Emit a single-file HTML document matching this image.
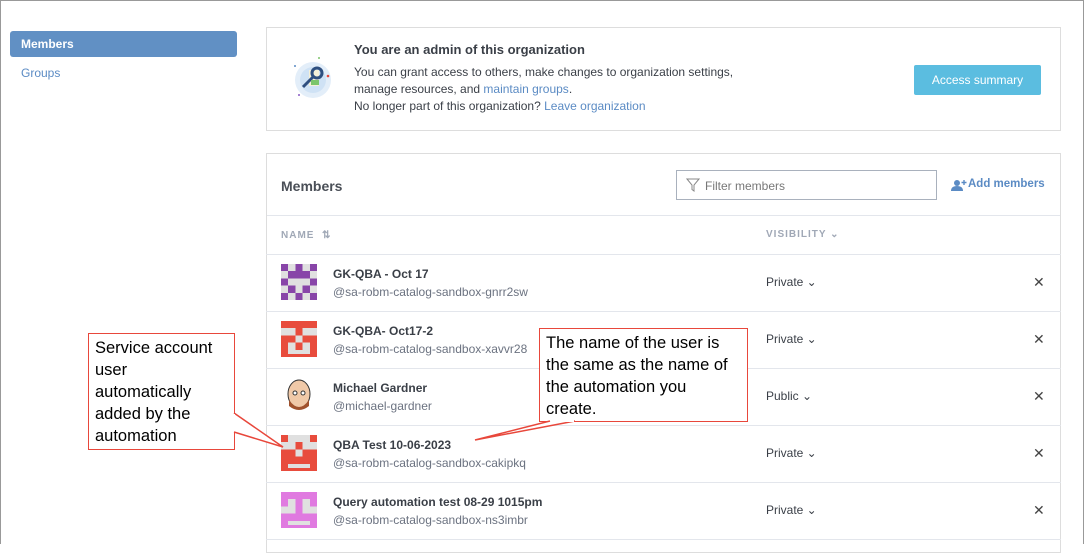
<!DOCTYPE html>
<html><head><meta charset="utf-8"><style>
*{box-sizing:border-box;margin:0;padding:0}
body{width:1084px;height:544px;overflow:hidden;background:#fff;font-family:"Liberation Sans",sans-serif;position:relative;color:#3a3f47}
.frame{position:absolute;left:0;top:0;width:1084px;height:544px;border:1px solid #999;border-bottom:none;pointer-events:none}
.nav{position:absolute;left:10px;top:31px;width:227px;height:26px;background:#6190c4;border-radius:3px;color:#fff;font-size:12px;font-weight:bold;padding:6px 11px}
.grp{position:absolute;left:21px;top:66px;font-size:12px;color:#5b8bc4}
.p1{position:absolute;left:266px;top:27px;width:795px;height:104px;border:1px solid #ddd}
.p2{position:absolute;left:266px;top:153px;width:795px;height:400px;border:1px solid #ddd}
.a{color:#5b8bc4}
.btn{position:absolute;left:914px;top:65px;width:127px;height:30px;background:#5bbde0;color:#fff;font-size:12px;text-align:center;line-height:30px;border-radius:2px}
.row{position:absolute;left:266px;width:795px;height:57px;border-top:1px solid #e3e6ec}
.av{position:absolute;left:15px;top:9px;width:36px;height:36px}
.nm{position:absolute;left:67px;top:12px;font-size:12px;font-weight:bold;color:#3a3f47}
.hd{position:absolute;left:67px;top:30px;font-size:12px;color:#6b7280}
.vis{position:absolute;left:500px;top:20px;font-size:12px;color:#3a3f47}
.x{position:absolute;left:767px;top:19px;font-size:14px;color:#444}
.call{position:absolute;border:1.5px solid #e8473b;background:#fff;font-size:16.5px;color:#000;line-height:22px;padding:3px 6px}
</style></head><body>
<div class="nav">Members</div>
<div class="grp">Groups</div>
<div class="p1">
<svg style="position:absolute;left:22px;top:28px" width="48" height="48"><circle cx="24" cy="24" r="18" fill="#e3eef9"/><circle cx="24" cy="24" r="13" fill="#cfe2f5"/><rect x="20" y="14" width="10" height="16" fill="#f5f0d8"/><circle cx="28" cy="17" r="5" fill="none" stroke="#2f4f7f" stroke-width="3"/><path d="M25 20 L14 31" stroke="#2f4f7f" stroke-width="3"/><rect x="22" y="24" width="8" height="5" fill="#7cc56a"/><circle cx="6" cy="10" r="1" fill="#5b8bc4"/><circle cx="39" cy="20" r="1.3" fill="#e8473b"/><circle cx="10" cy="39" r="1" fill="#8a5bc4"/><circle cx="30" cy="2" r="1" fill="#7cc56a"/></svg>
<div style="position:absolute;left:87px;top:14px;font-size:13px;font-weight:bold">You are an admin of this organization</div>
<div style="position:absolute;left:87px;top:36px;font-size:12px;line-height:17px">You can grant access to others, make changes to organization settings,<br>manage resources, and <span class="a">maintain groups</span>.<br>No longer part of this organization? <span class="a">Leave organization</span></div>
</div>
<div class="btn">Access summary</div>
<div class="p2">
<div style="position:absolute;left:14px;top:24px;font-size:14px;font-weight:bold;color:#4a4f57">Members</div>
<div style="position:absolute;left:409px;top:16px;width:261px;height:30px;border:1px solid #a9b1bd;font-size:12px;color:#777;padding:8px 0 0 28px">Filter members
<svg style="position:absolute;left:9px;top:7px" width="14" height="15"><path d="M1 1h12l-5 6v6l-2-1.5V7z" fill="none" stroke="#888"/></svg></div>
<svg style="position:absolute;left:684px;top:25px" width="16" height="12"><circle cx="6" cy="4" r="3" fill="#5b8bc4"/><path d="M0 12q0-5 6-5t6 5z" fill="#5b8bc4"/><path d="M13 1v5M10.5 3.5h5" stroke="#5b8bc4" stroke-width="1.4"/></svg>
<div style="position:absolute;left:701px;top:24px;font-size:11.5px;font-weight:bold;color:#5b8bc4">Add members</div>
<div style="position:absolute;left:0;top:61px;width:793px;border-top:1px solid #e3e6ec"></div>
<div style="position:absolute;left:14px;top:76px;font-size:10px;font-weight:bold;color:#a0a8b6;letter-spacing:1px">NAME &nbsp;⇅</div>
<div style="position:absolute;left:499px;top:75px;font-size:10px;font-weight:bold;color:#a0a8b6;letter-spacing:1px">VISIBILITY ⌄</div>
</div>
<div class="row" style="top:254px"><svg class="av" viewBox="0 0 5 5" shape-rendering="crispEdges"><rect width="5" height="5" fill="#8845a8"/><path fill="#e0e0e0" d="M1 0h1v1H1zM3 0h1v1H3zM0 1h1v1H0zM4 1h1v1H4zM1 2h3v1H1zM0 3h1v1H0zM2 3h1v1H2zM4 3h1v1H4zM1 4h1v1H1zM3 4h1v1H3z"/></svg><div class="nm">GK-QBA - Oct 17</div><div class="hd">@sa-robm-catalog-sandbox-gnrr2sw</div><div class="vis">Private ⌄</div><div class="x">✕</div></div>
<div class="row" style="top:311px"><svg class="av" viewBox="0 0 5 5" shape-rendering="crispEdges"><rect width="5" height="5" fill="#e84c3d"/><path fill="#e0e0e0" d="M0 1h2v1H0zM3 1h2v1H3zM2 2h1v1H2zM1 3h1v1H1zM3 3h1v1H3zM1 4h3v.6H1z"/></svg><div class="nm">GK-QBA- Oct17-2</div><div class="hd">@sa-robm-catalog-sandbox-xavvr28</div><div class="vis">Private ⌄</div><div class="x">✕</div></div>
<div class="row" style="top:368px"><svg class="av" viewBox="0 0 36 36"><ellipse cx="18" cy="16" rx="11" ry="14" fill="#f0c9a8" stroke="#333"/><path d="M8 22q10 14 20 0v6q-10 8-20 0z" fill="#a0522d"/><circle cx="14" cy="15" r="2" fill="#fff" stroke="#333"/><circle cx="22" cy="15" r="2" fill="#fff" stroke="#333"/></svg><div class="nm">Michael Gardner</div><div class="hd">@michael-gardner</div><div class="vis">Public ⌄</div><div class="x">✕</div></div>
<div class="row" style="top:425px"><svg class="av" viewBox="0 0 5 5" shape-rendering="crispEdges"><rect width="5" height="5" fill="#e84c3d"/><path fill="#e0e0e0" d="M1 0h3v1H1zM0 1h2v1H0zM3 1h2v1H3zM2 2h1v1H2zM1 4h3v.6H1z"/></svg><div class="nm">QBA Test 10-06-2023</div><div class="hd">@sa-robm-catalog-sandbox-cakipkq</div><div class="vis">Private ⌄</div><div class="x">✕</div></div>
<div class="row" style="top:482px"><svg class="av" viewBox="0 0 5 5" shape-rendering="crispEdges"><rect width="5" height="5" fill="#e07ae0"/><path fill="#e0e0e0" d="M1 1h1v2H1zM3 1h1v2H3zM0 2h1v1H0zM4 2h1v1H4zM1 4h3v.6H1z"/></svg><div class="nm">Query automation test 08-29 1015pm</div><div class="hd">@sa-robm-catalog-sandbox-ns3imbr</div><div class="vis">Private ⌄</div><div class="x">✕</div></div>
<div style="position:absolute;left:266px;top:539px;width:795px;border-top:1px solid #e3e6ec"></div>
<div class="call" style="left:88px;top:333px;width:147px;height:117px;padding-right:14px">Service account user automatically added by the automation</div>
<div class="call" style="left:539px;top:328px;width:209px;height:94px;padding-right:14px">The name of the user is the same as the name of the automation you create.</div>
<svg style="position:absolute;left:0;top:0" width="1084" height="544"><path d="M234 413 L283 447 L234 432" fill="#fff" stroke="#e8473b" stroke-width="1.5"/><rect x="233" y="414" width="2" height="17" fill="#fff"/><path d="M550 421 L475 440 L575 421" fill="#fff" stroke="#e8473b" stroke-width="1.5"/><rect x="551" y="420" width="23" height="2" fill="#fff"/></svg>
<div class="frame"></div>
</body></html>
